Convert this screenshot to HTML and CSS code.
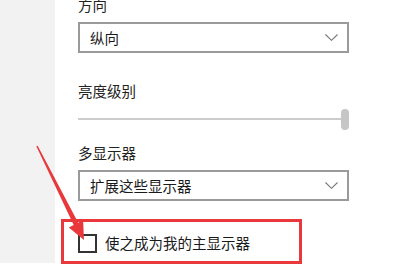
FILE: index.html
```html
<!DOCTYPE html>
<html lang="zh-CN">
<head>
<meta charset="utf-8">
<link rel="stylesheet" href="styles.css">
</head>
<body>
<div class="page">
  <aside class="side"></aside>
  <main class="main">
    <div class="label label-first">方向</div>
    <div class="select">
      <span class="select-text">纵向</span>
      <svg class="chev" width="13" height="7" viewBox="0 0 13 7"><path d="M0.5 0.5 L6.5 6.3 L12.5 0.5" fill="none" stroke="#777" stroke-width="1.1"/></svg>
    </div>
    <div class="label label-bright">亮度级别</div>
    <div class="slider">
      <div class="track"></div>
      <div class="thumb"></div>
    </div>
    <div class="label label-multi">多显示器</div>
    <div class="select">
      <span class="select-text">扩展这些显示器</span>
      <svg class="chev" width="13" height="7" viewBox="0 0 13 7"><path d="M0.5 0.5 L6.5 6.3 L12.5 0.5" fill="none" stroke="#777" stroke-width="1.1"/></svg>
    </div>
    <div class="highlight">
      <span class="checkbox"></span>
      <span class="check-text">使之成为我的主显示器</span>
    </div>
  </main>
</div>
<svg class="arrow" width="399" height="272" viewBox="0 0 399 272">
  <polygon points="37.67,145.66 78.2,222.8 83.1,220.3 84,240 68.8,227.5 73.7,225.0 36.33,146.34" fill="#e8383b"/>
</svg>
</body>
</html>
```

FILE: styles.css
```css
html, body {
  margin: 0;
  padding: 0;
  background: #ffffff;
  overflow: hidden;
}

body {
  font-family: "Noto Sans CJK SC", "Noto Sans", sans-serif;
  font-size: 14.5px;
  color: #222222;
  width: 399px;
  height: 272px;
  position: relative;
}

.page {
  display: flex;
  align-items: flex-start;
}

.side {
  width: 55px;
  height: 263px;
  background: #f2f2f2;
  flex: none;
}

.main {
  padding-left: 23px;
  display: flex;
  flex-direction: column;
  width: 271px;
}

.label {
  line-height: 20px;
  height: 20px;
  white-space: nowrap;
}

.label-first {
  margin-top: -5px;
  margin-bottom: 7px;
}

.label-bright {
  margin-top: 28px;
  margin-bottom: 7px;
}

.label-multi {
  margin-top: 13px;
  margin-bottom: 7px;
}

.select {
  box-sizing: border-box;
  width: 271px;
  height: 31px;
  border: 2px solid #9a9a9a;
  display: flex;
  align-items: center;
  justify-content: space-between;
  padding: 0 9px 0 10px;
  background: #fff;
}

.select-text {
  color: #1a1a1a;
  line-height: 20px;
}

.chev {
  display: block;
}

.slider {
  position: relative;
  height: 22px;
  display: flex;
  align-items: center;
}

.track {
  width: 264px;
  height: 2px;
  background: #cccccc;
}

.thumb {
  width: 8px;
  height: 21px;
  border-radius: 4px;
  background: #c6c6c6;
}

.highlight {
  box-sizing: border-box;
  margin-top: 18px;
  margin-left: -17px;
  width: 241px;
  height: 45px;
  border: 3px solid #e8383b;
  display: flex;
  align-items: center;
  padding: 3px 0 0 14px;
  gap: 8px;
}

.checkbox {
  box-sizing: border-box;
  width: 19px;
  height: 19px;
  border: 2px solid #333333;
  background: #fff;
  flex: none;
}

.check-text {
  color: #1a1a1a;
  line-height: 20px;
  white-space: nowrap;
}

.arrow {
  position: absolute;
  left: 0;
  top: 0;
  pointer-events: none;
}
```
